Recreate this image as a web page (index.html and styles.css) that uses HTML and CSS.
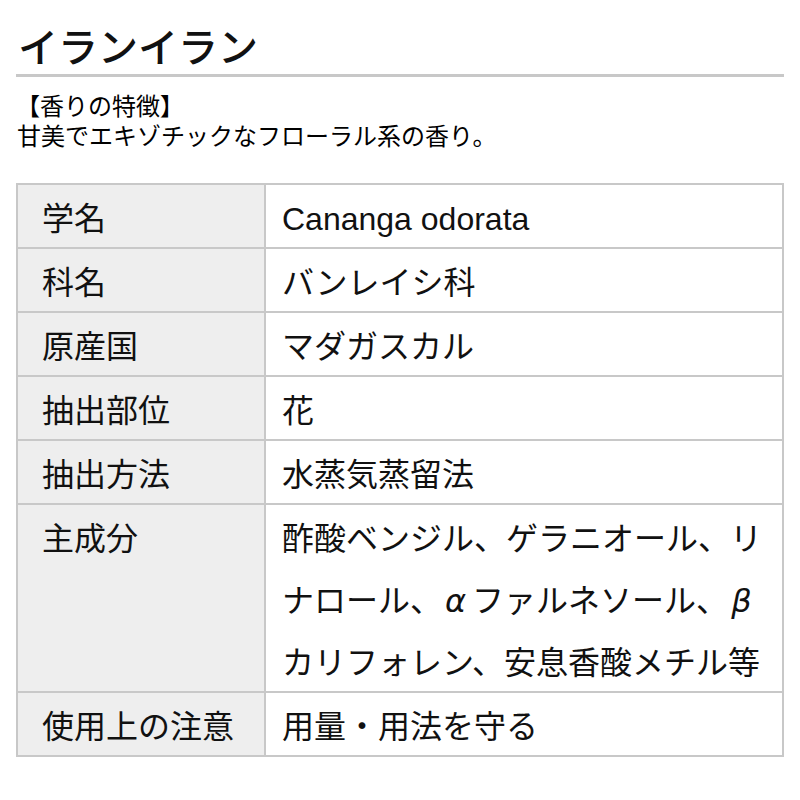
FILE: index.html
```html
<!DOCTYPE html>
<html lang="ja">
<head>
<meta charset="utf-8">
<link rel="stylesheet" href="styles.css">
</head>
<body>
<div class="page">
  <h1 class="title">イランイラン</h1>
  <div class="feature">
    <p class="feature-head">【香りの特徴】</p>
    <p class="feature-text">甘美でエキゾチックなフローラル系の香り。</p>
  </div>
  <table class="spec">
    <tr><th>学名</th><td><span class="latin">Cananga odorata</span></td></tr>
    <tr><th>科名</th><td>バンレイシ科</td></tr>
    <tr><th>原産国</th><td>マダガスカル</td></tr>
    <tr><th>抽出部位</th><td>花</td></tr>
    <tr><th>抽出方法</th><td>水蒸気蒸留法</td></tr>
    <tr><th>主成分</th><td>酢酸ベンジル、ゲラニオール、リ<br>ナロール、<i class="greek">α</i>ファルネソール、<i class="greek">β</i><br>カリフォレン、安息香酸メチル等</td></tr>
    <tr><th>使用上の注意</th><td>用量・用法を守る</td></tr>
  </table>
</div>
</body>
</html>
```

FILE: styles.css
```css
html, body {
  margin: 0;
  padding: 0;
  background: #ffffff;
}
body {
  font-family: "Noto Sans CJK JP", "Noto Sans", sans-serif;
  color: #111111;
}
.page {
  padding: 0 16px;
}
.title {
  margin: 0;
  padding: 20px 0 4px 2px;
  font-size: 40px;
  line-height: 50px;
  font-weight: 500;
  border-bottom: 3px solid #c8c8c8;
}
.feature {
  margin-top: 13px;
}
.feature p {
  margin: 0;
  font-size: 24px;
  line-height: 30px;
  color: #000000;
}
.feature-text {
  padding-left: 1px;
}
.spec {
  margin-top: 33px;
  width: 100%;
  border-collapse: collapse;
  font-size: 32px;
}
.spec th, .spec td {
  border: 2px solid #c8c8c8;
  line-height: 62px;
  padding: 0;
  text-align: left;
  vertical-align: top;
  font-weight: 400;
}
.spec th {
  width: 222px;
  padding-left: 24px;
  background: #eeeeee;
}
.spec td {
  padding-left: 16px;
  padding-right: 6px;
}
.latin {
  font-family: "Liberation Sans", sans-serif;
  line-height: 1;
}
.greek {
  font-family: "DejaVu Sans", sans-serif;
  font-style: italic;
  line-height: 1;
  padding: 0 6px 0 3px;
}
```
